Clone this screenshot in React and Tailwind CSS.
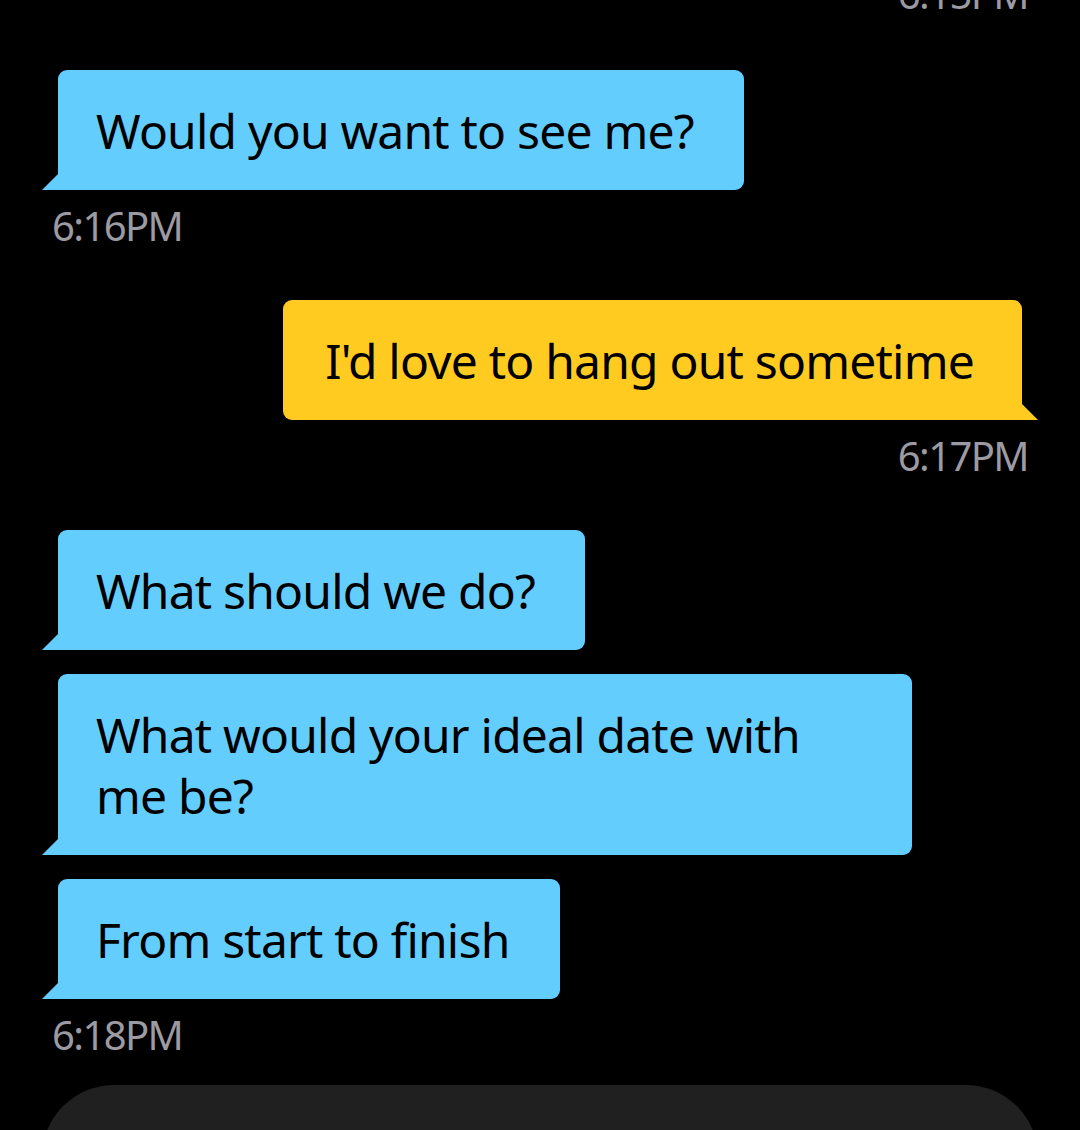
import React from 'react';

const font = { fontFamily: '"Noto Sans", "Open Sans", sans-serif' };

const Bubble = ({ side, children }) => {
    const mine = side === 'right';
    return (
        <div className={mine ? 'flex justify-end pr-[58px]' : 'flex justify-start pl-[58px]'}>
            <div
                className={
                    mine
                        ? 'relative max-w-[854px] rounded-[9px] rounded-br-none bg-[#ffcb20] py-[29.5px] pl-[42px] pr-[48px] text-[48px] leading-[61px] tracking-[-0.8px] text-black'
                        : 'relative max-w-[854px] rounded-[9px] rounded-bl-none bg-[#63cefe] py-[29.5px] pl-[38px] pr-[50px] text-[48px] leading-[61px] tracking-[-0.8px] text-black'
                }
            >
                {children}
                {mine ? (
                    <svg className="absolute bottom-0 right-[-16px]" width="16" height="16" viewBox="0 0 16 16">
                        <path d="M0 0 L16 16 L0 16 Z" fill="#ffcb20" />
                    </svg>
                ) : (
                    <svg className="absolute bottom-0 left-[-16px]" width="16" height="16" viewBox="0 0 16 16">
                        <path d="M16 0 L0 16 L16 16 Z" fill="#63cefe" />
                    </svg>
                )}
            </div>
        </div>
    );
};

const Stamp = ({ side, children, className = '' }) => (
    <div className={`${side === 'right' ? 'pr-[52px] text-right' : 'pl-[52px] text-left'} text-[40px] leading-[48px] tracking-[-1.6px] text-[#9c9aa3] ${className}`}>
        {children}
    </div>
);

export default function App() {
    return (
        <div className="relative h-[1130px] w-[1080px] overflow-hidden bg-black" style={font}>
            <div className="flex flex-col">
                <Stamp side="right" className="mt-[-30px]">6:15PM</Stamp>
                <div className="mt-[52px]">
                    <Bubble side="left">Would you want to see me?</Bubble>
                </div>
                <Stamp side="left" className="mt-[12px]">6:16PM</Stamp>
                <div className="mt-[50px]">
                    <Bubble side="right">I'd love to hang out sometime</Bubble>
                </div>
                <Stamp side="right" className="mt-[12px]">6:17PM</Stamp>
                <div className="mt-[50px] flex flex-col gap-[24px]">
                    <Bubble side="left">What should we do?</Bubble>
                    <Bubble side="left">What would your ideal date with me be?</Bubble>
                    <Bubble side="left">From start to finish</Bubble>
                </div>
                <Stamp side="left" className="mt-[12px]">6:18PM</Stamp>
                <div className="mx-[42px] mt-[26px] h-[120px] rounded-t-[72px] bg-[#202020]" />
            </div>
        </div>
    );
}
